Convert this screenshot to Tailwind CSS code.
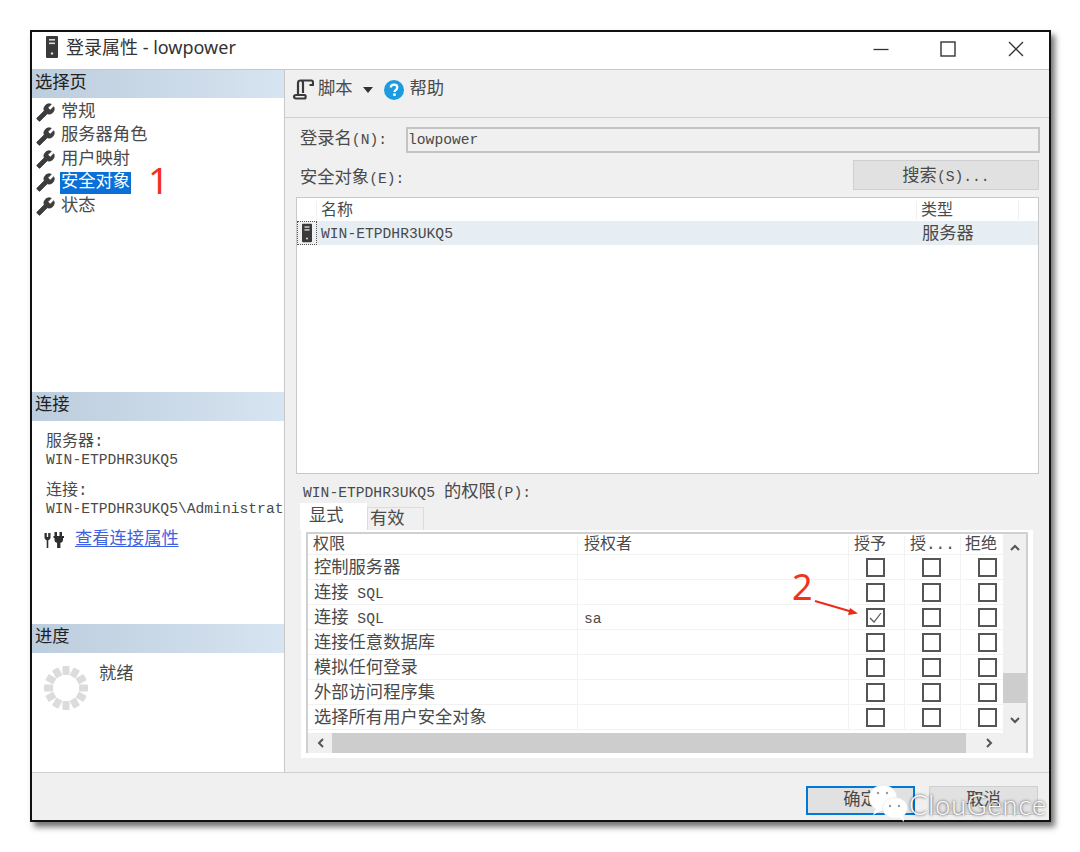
<!DOCTYPE html>
<html lang="zh-CN">
<head>
    <meta charset="UTF-8">
    <title>登录属性 - lowpower</title>
    <script src="https://cdn.jsdelivr.net/npm/@tailwindcss/browser@4"></script>
</head>
<body class="bg-white w-[1080px] h-[852px] overflow-hidden">
    <svg class="hidden">
        <symbol id="wrench" viewBox="0 0 24 24">
            <path transform="translate(24 0) scale(-1 1)" d="M22.7 19l-9.1-9.1c.9-2.3.4-5-1.5-6.9-2-2-5-2.4-7.4-1.3L9 6 6 9 1.6 4.7C.4 7.1.9 10.1 2.9 12.1c1.9 1.9 4.6 2.4 6.9 1.5l9.1 9.1c.4.4 1 .4 1.4 0l2.3-2.3c.5-.4.5-1.1.1-1.4z" fill="#3c3c3c" stroke="#3c3c3c" stroke-width="1"/>
        </symbol>
        <symbol id="server" viewBox="0 0 12 22">
            <rect x="0" y="0" width="12" height="22" rx="1" fill="#3a3a3a"/>
            <rect x="3" y="3" width="6" height="1.6" fill="#ddd"/>
            <rect x="3" y="6.5" width="6" height="1.6" fill="#ddd"/>
            <circle cx="6" cy="17.5" r="1.2" fill="#ddd"/>
        </symbol>
    </svg>

    <div class="relative ml-[30px] mt-[30px] w-[1021px] h-[792px] border-2 border-[#111] shadow-[4px_5px_6px_rgba(0,0,0,0.55)] flex flex-col bg-[#f0f0f0] font-['Liberation_Mono','Noto_Sans_CJK_SC',monospace] text-[17.3px] leading-none text-[#4a4a4a]">

        <!-- title bar -->
        <div class="h-[38px] shrink-0 bg-white border-b border-[#c8c8c8] flex items-center pb-[7px]">
            <svg class="ml-[14px] w-[12px] h-[22px]"><use href="#server"/></svg>
            <span class="ml-[8px] text-[18px] text-[#333] font-['Noto_Sans','Noto_Sans_CJK_SC',sans-serif]">登录属性 - lowpower</span>
            <div class="ml-auto mt-[3px] flex items-center">
                <svg class="w-[16px] h-[16px] mr-[51px]" viewBox="0 0 16 16"><path d="M0.5 8.5H15.5" stroke="#333" stroke-width="1.3"/></svg>
                <svg class="w-[16px] h-[16px] mr-[52px]" viewBox="0 0 16 16"><rect x="1" y="1" width="14" height="14" fill="none" stroke="#333" stroke-width="1.4"/></svg>
                <svg class="w-[16px] h-[16px] mr-[25px]" viewBox="0 0 16 16"><path d="M1 1L15 15M15 1L1 15" stroke="#333" stroke-width="1.3"/></svg>
            </div>
        </div>

        <!-- body -->
        <div class="flex flex-1 min-h-0">
            <!-- left column -->
            <div class="w-[253px] shrink-0 bg-white border-r border-[#c8c8c8] flex flex-col overflow-hidden">
                <div class="h-[322px] shrink-0">
                    <div class="h-[28px] flex items-center pl-[3px] bg-gradient-to-r from-[#bccddd] to-[#d7e4f1] text-[#222]">选择页</div>
                    <div id="pages" class="pt-[3px]"></div>
                </div>
                <div class="h-[232px] shrink-0">
                    <div class="h-[29px] flex items-center pl-[3px] pb-[2px] bg-gradient-to-r from-[#bccddd] to-[#d7e4f1] text-[#222]">连接</div>
                    <div class="pl-[14px] pt-[13px] whitespace-nowrap">
                        <div class="h-[19px] text-[16px]">服务器:</div>
                        <div class="h-[19px] text-[14.67px]">WIN-ETPDHR3UKQ5</div>
                        <div class="mt-[11px] h-[19px] text-[16px]">连接:</div>
                        <div class="h-[19px] text-[14.67px]">WIN-ETPDHR3UKQ5\Administrator</div>
                    </div>
                    <div class="flex items-center pl-[12px] mt-[10px]">
                        <svg class="w-[21px] h-[18px]" viewBox="0 0 21 18" fill="#2e2e2e">
                            <path d="M0.500 2h2.300v4h1.400V2h2.300v4.500c0 1.500-1 2.400-2.200 2.700V17H2.700V9.200C1.500 8.900 0.500 8 0.500 6.500z"/>
                            <path d="M10.500 1h2.500v4h2.500V1h2.500v4h2v2h-1v2c0 1.500-1.200 2.600-2.600 2.800V17h-3.300v-5.200C11.700 11.600 10.500 10.500 10.500 9V7H9.500V5h1z"/>
                        </svg>
                        <a class="ml-[10px] text-[#3f62e4] underline underline-offset-2">查看连接属性</a>
                    </div>
                </div>
                <div class="flex-1">
                    <div class="h-[29px] flex items-center pl-[3px] pb-[2px] bg-gradient-to-r from-[#bccddd] to-[#d7e4f1] text-[#222]">进度</div>
                    <div class="flex pl-[11px] pt-[12px]">
                        <svg class="w-[46px] h-[46px]" viewBox="0 0 46 46" id="spinner"></svg>
                        <span class="ml-[10px] mt-[1px]">就绪</span>
                    </div>
                </div>
            </div>

            <!-- right column -->
            <div class="flex-1 flex flex-col min-w-0">
                <div class="h-[48px] shrink-0 border-b border-[#d0d0d0] flex items-center pl-[8px] pb-[15px] pt-[7px]">
                    <svg class="w-[21px] h-[21px]" viewBox="0 0 21 21" fill="none" stroke="#3a3a3a" stroke-width="2.200">
                        <path d="M5 16V4C5 2.400 6 1.500 7.500 1.500H18.500C19.500 1.500 20 2.500 20 3.500V6H16.500M7.500 1.500C9 1.500 10 2.500 10 4V14M1 17.500C1 16.500 2 16 3 16H11.500C13 16 13 19.500 11.500 19.500H3C2 19.500 1 18.500 1 17.500Z"/>
                    </svg>
                    <span class="ml-[4px]">脚本</span>
                    <svg class="ml-[10px] w-[10px] h-[6px]" viewBox="0 0 10 6"><path d="M0 0H10L5 6Z" fill="#333"/></svg>
                    <svg class="ml-[11px] w-[20px] h-[20px]" viewBox="0 0 20 20">
                        <circle cx="10" cy="10" r="10" fill="#1c9be0"/>
                        <path d="M6.800 7.600C6.800 5.700 8.200 4.700 10 4.700C11.900 4.700 13.300 5.800 13.300 7.500C13.300 9.900 10.500 9.700 10.500 12" fill="none" stroke="#fff" stroke-width="2.200"/>
                        <rect x="9.200" y="13.400" width="2.500" height="2.500" fill="#fff"/>
                    </svg>
                    <span class="ml-[6px]">帮助</span>
                </div>

                <div class="pl-[15px] pt-[9px] flex items-center">
                    <span class="w-[106px] shrink-0">登录名<span class="text-[14.67px]">(N):</span></span>
                    <div class="w-[634px] h-[26px] border-2 border-[#c4c4c4] flex items-center text-[14.67px]">lowpower</div>
                </div>

                <div class="pl-[15px] mt-[7px] flex items-center h-[30px]">
                    <span class="mt-[8px]">安全对象<span class="text-[14.67px]">(E):</span></span>
                    <div class="ml-auto mr-[10px] w-[186px] h-[30px] pt-[4px] bg-[#e1e1e1] border border-[#cfcfcf] flex items-center justify-center">搜索<span class="text-[14.67px]">(S)...</span></div>
                </div>

                <!-- securables list -->
                <div class="ml-[11px] mr-[10px] mt-[7px] h-[277px] shrink-0 bg-white border border-[#c8c8c8]">
                    <div class="h-[23px] flex text-[16px] border-b border-white pt-[3px]">
                        <div class="w-[20px] border-r border-[#f0f0f0]"></div>
                        <div class="w-[600px] pl-[4px] flex items-center border-r border-[#f0f0f0]">名称</div>
                        <div class="w-[102px] pl-[4px] flex items-center border-r border-[#f0f0f0]">类型</div>
                    </div>
                    <div class="h-[24px] flex bg-[#e6eef4]">
                        <div class="w-[20px] flex items-center justify-center border border-dotted border-[#555] bg-[#f0f0f0]">
                            <svg class="w-[10px] h-[20px]"><use href="#server"/></svg>
                        </div>
                        <div class="w-[600px] pl-[4px] pt-[2px] flex items-center text-[14.67px]">WIN-ETPDHR3UKQ5</div>
                        <div class="pl-[5px] pt-[3px] flex items-center">服务器</div>
                    </div>
                </div>

                <div class="pl-[18px] mt-[10px] h-[18px] flex items-center"><span class="text-[14.67px]">WIN-ETPDHR3UKQ5 </span><span class="ml-[9px]">的权限</span><span class="text-[14.67px]">(P):</span></div>

                <!-- tabs -->
                <div class="flex items-end pl-[15px] mt-[1px] h-[27px]">
                    <div class="w-[67px] h-[27px] bg-white pl-[9px] pt-[5px]">显式</div>
                    <div class="w-[57px] h-[23px] bg-[#f0f0f0] border border-b-0 border-[#dcdcdc] pl-[2px] pt-[3px]">有效</div>
                </div>
                <div class="ml-[16px] w-[732px] h-[228px] bg-white px-[5px] pt-[2px]">
                    <div class="w-[722px] h-[221px] border-2 border-[#d0d0d0] border-b-0 flex flex-col overflow-hidden">
                        <div class="flex flex-1 min-h-0">
                            <div id="perms" class="w-[695px] shrink-0"></div>
                            <div class="flex-1 bg-[#f0f0f0] flex flex-col items-center">
                                <svg class="mt-[10px] w-[10px] h-[7px]" viewBox="0 0 10 7"><path d="M1 6L5 2L9 6" fill="none" stroke="#555" stroke-width="2"/></svg>
                                <div class="mt-[122px] w-full h-[30px] bg-[#cdcdcd]"></div>
                                <svg class="mt-[14px] w-[10px] h-[7px]" viewBox="0 0 10 7"><path d="M1 1L5 5L9 1" fill="none" stroke="#555" stroke-width="2"/></svg>
                            </div>
                        </div>
                        <div class="h-[20px] shrink-0 bg-[#f0f0f0] flex items-center">
                            <svg class="ml-[9px] w-[7px] h-[10px]" viewBox="0 0 7 10"><path d="M6 1L2 5L6 9" fill="none" stroke="#555" stroke-width="2"/></svg>
                            <div class="ml-[8px] w-[634px] h-[20px] bg-[#cdcdcd]"></div>
                            <svg class="ml-[20px] w-[7px] h-[10px]" viewBox="0 0 7 10"><path d="M1 1L5 5L1 9" fill="none" stroke="#555" stroke-width="2"/></svg>
                        </div>
                    </div>
                </div>
            </div>
        </div>

        <!-- footer -->
        <div class="h-[48px] shrink-0 border-t border-[#d0d0d0] flex items-start justify-end pt-[13px] pr-[11px] gap-[14px]">
            <div class="w-[109px] h-[29px] bg-[#e1e1e1] border-2 border-[#0078d7] flex items-center justify-center">确定</div>
            <div class="w-[109px] h-[29px] bg-[#e1e1e1] border border-[#cfcfcf] flex items-center justify-center">取消</div>
        </div>

        <!-- annotations and watermark lie over the window -->
        <span class="absolute left-[116px] top-[129px] text-[37px] text-[#f0321e] font-['Noto_Sans',sans-serif]">1</span>
        <span class="absolute left-[760px] top-[537px] text-[36px] text-[#f0321e] font-['Noto_Sans',sans-serif]">2</span>
        <svg class="absolute left-[781px] top-[567px] w-[48px] h-[20px]" viewBox="0 0 48 20">
            <path d="M2 2L38 12.500" stroke="#ee2a1a" stroke-width="2"/>
            <path d="M45 14.500L35 16L37 9Z" fill="#ee2a1a"/>
        </svg>
        <svg class="absolute left-[836px] top-[752px] w-[44px] h-[44px]" viewBox="0 0 44 44">
            <ellipse cx="15" cy="14" rx="14" ry="13" fill="#fff" stroke="#ddd" stroke-width="0.500"/>
            <path d="M8 24L5 31L14 26Z" fill="#fff"/>
            <ellipse cx="27" cy="24" rx="12.500" ry="10.500" fill="#fff" stroke="#ddd" stroke-width="0.500"/>
            <path d="M30 32L36 38L35 30Z" fill="#fff"/>
            <circle cx="10" cy="9" r="1.200" fill="#999"/><circle cx="19" cy="9" r="1.200" fill="#999"/>
            <circle cx="22" cy="22" r="1.200" fill="#999"/><circle cx="31" cy="22" r="1.200" fill="#999"/>
        </svg>
        <span class="absolute left-[877px] top-[759px] text-[27px] tracking-[1px] text-white font-['Lato',sans-serif] font-light [text-shadow:0_0_3px_rgba(0,0,0,0.85)]">ClouGence</span>
    </div>

    <script>
        const pages = ['常规', '服务器角色', '用户映射', '安全对象', '状态'];
        document.getElementById('pages').innerHTML = pages.map((name, i) => `
            <div class="h-[23.4px] flex items-center pl-[4px]">
                <svg class="w-[19px] h-[19px] shrink-0"><use href="#wrench"/></svg>
                <span class="${i === 3 ? 'ml-[5px] px-[1px] h-[22px] flex items-center bg-[#0a6fd6] text-white' : 'ml-[6px]'}">${name}</span>
            </div>`).join('');

        const rows = [
            ['控制服务器', '', false],
            ['连接<span class="text-[14.67px] whitespace-pre"> SQL</span>', '', false],
            ['连接<span class="text-[14.67px] whitespace-pre"> SQL</span>', 'sa', true],
            ['连接任意数据库', '', false],
            ['模拟任何登录', '', false],
            ['外部访问程序集', '', false],
            ['选择所有用户安全对象', '', false]
        ];
        const box = checked => `
            <div class="w-[56px] shrink-0 flex items-center justify-center pr-[3px] border-r border-[#f2f2f2]">
                <div class="w-[19px] h-[19px] border-2 border-[#555] flex items-center justify-center">
                    ${checked ? '<svg class="w-[15px] h-[15px]" viewBox="0 0 15 15"><path d="M2 8L6 12L13 3" fill="none" stroke="#555" stroke-width="1.200"/></svg>' : ''}
                </div>
            </div>`;
        const head = `
            <div class="h-[21px] flex text-[16px] border-b border-[#f2f2f2] pt-[2px]">
                <div class="w-[270px] pl-[5px] flex items-center border-r border-[#f2f2f2]">权限</div>
                <div class="w-[271px] pl-[6px] flex items-center border-r border-[#f2f2f2]">授权者</div>
                <div class="w-[56px] pl-[5px] flex items-center border-r border-[#f2f2f2]">授予</div>
                <div class="w-[56px] pl-[5px] flex items-center border-r border-[#f2f2f2]">授...</div>
                <div class="w-[42px] pl-[4px] flex items-center">拒绝</div>
            </div>`;
        document.getElementById('perms').innerHTML = head + rows.map(([name, grantor, checked]) => `
            <div class="h-[25px] flex border-b border-[#f2f2f2] overflow-hidden">
                <div class="w-[270px] shrink-0 pl-[6px] pt-[4px] flex items-center border-r border-[#f2f2f2]"><span>${name}</span></div>
                <div class="w-[271px] shrink-0 pl-[6px] pt-[4px] flex items-center border-r border-[#f2f2f2] text-[14.67px]">${grantor}</div>
                ${box(checked)}${box(false)}${box(false)}
            </div>`).join('');

        // spinner: 12 grey blocks on a ring
        let ticks = '';
        for (let i = 0; i < 12; i++) {
            ticks += `<rect x="19.5" y="1" width="7" height="9" rx="1" fill="#dcdcdc" transform="rotate(${i * 30} 23 23)"/>`;
        }
        document.getElementById('spinner').innerHTML = ticks;
    </script>
</body>
</html>
